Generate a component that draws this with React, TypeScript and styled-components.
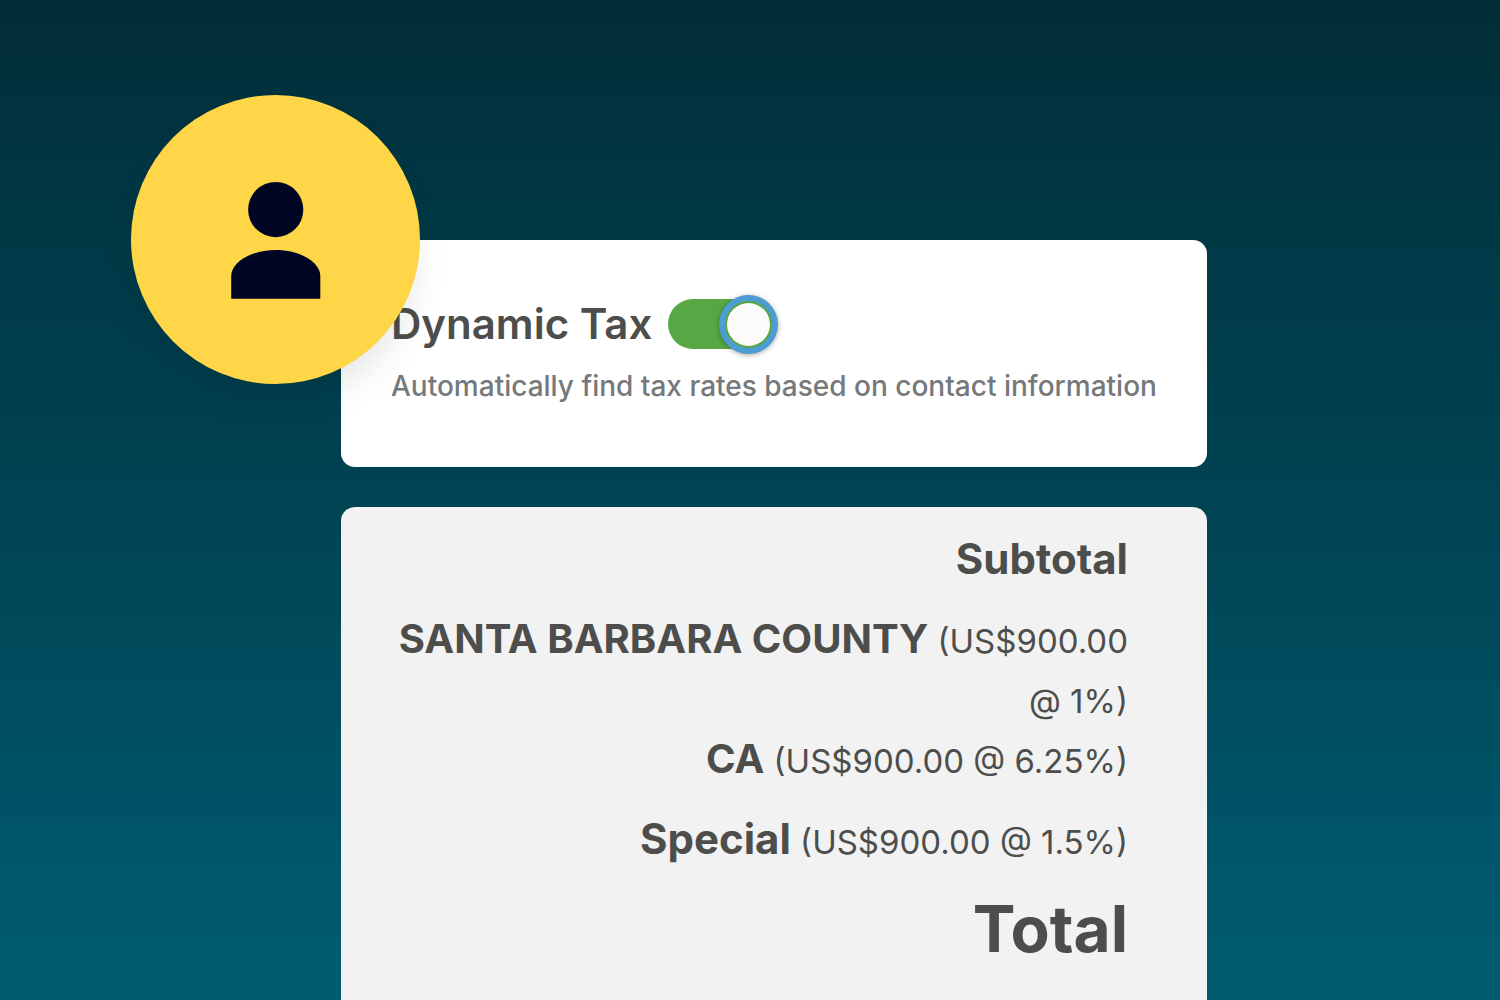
import React from "react";
import styled, { createGlobalStyle } from "styled-components";

const GlobalStyle = createGlobalStyle`
  *, *::before, *::after { box-sizing: border-box; }
  body {
    margin: 0;
    background: #00596f;
    color: #4d4e4c;
    font-family: Inter, "Liberation Sans", sans-serif;
  }
`;

const Page = styled.main`
  display: grid;
  grid-template-columns: 341fr 866fr 293fr;
  min-height: 100vh;
  padding-top: 240px;
  overflow: hidden;
  background: linear-gradient(180deg, #032d37 0%, #003744 20%, #004251 47%, #005a70 95%);
`;

const Column = styled.div`
  grid-column: 2;
  display: flex;
  flex-direction: column;
  gap: 40px;
`;

const SettingCard = styled.section`
  position: relative;
  display: flex;
  flex-direction: column;
  gap: 12px;
  padding: 54px 40px 61px 50px;
  border-radius: 14px;
  background: #fff;
`;

const Avatar = styled.div`
  position: absolute;
  top: -145px;
  left: -210px;
  width: 289px;
  height: 289px;
  border-radius: 50%;
  background: #ffd647;
  box-shadow: 0 22px 36px -6px rgba(0, 0, 0, 0.1);

  svg { display: block; width: 100%; height: 100%; }
`;

const SettingRow = styled.div`
  display: flex;
  align-items: center;
  gap: 16px;
  height: 60px;
`;

const SettingLabel = styled.label`
  font-size: 42px;
  font-weight: 600;
  line-height: 60px;
  white-space: nowrap;
`;

const Switch = styled.input`
  appearance: none;
  flex: none;
  display: flex;
  align-items: center;
  width: 105px;
  height: 50px;
  margin: 0;
  padding: 3px;
  border-radius: 25px;
  background: #57a845;
  cursor: pointer;

  &::before {
    content: "";
    width: 43px;
    height: 43px;
    border-radius: 50%;
    background: #fbfbfb;
    box-shadow: 0 0 0 2px #57a845, 0 0 0 8px #4d9dd2, 0 1px 5px 8px rgba(0, 0, 0, 0.35);
  }

  &:checked { justify-content: flex-end; }
  &:not(:checked) { background: #b5b5b5; }
`;

const Hint = styled.p`
  margin: 0;
  color: #75797b;
  font-size: 28px;
  font-weight: 500;
  line-height: 40px;
  white-space: nowrap;
`;

const TotalsCard = styled.section`
  flex: 1;
  padding: 22px 79px 20px 50px;
  border-radius: 14px 14px 0 0;
  background: #f2f2f2;
`;

const Totals = styled.ul`
  margin: 0;
  padding: 0;
  list-style: none;
  text-align: right;
`;

const nameSizes = { compact: "40px", regular: "42px", large: "64px" };

const TotalsRow = styled.li<{ $size: keyof typeof nameSizes; $spaced?: boolean }>`
  margin-bottom: ${(p) => (p.$spaced ? "20px" : "0")};
  font-size: ${(p) => nameSizes[p.$size]};
  line-height: ${(p) => (p.$size === "large" ? "80px" : "60px")};
`;

const RowName = styled.strong<{ $size: keyof typeof nameSizes }>`
  font-weight: ${(p) => (p.$size === "compact" ? 650 : 700)};
`;

const Rate = styled.span`
  font-size: 33px;
  line-height: 1;
`;

const rows: {
  name: string;
  size: keyof typeof nameSizes;
  rate?: string;
  spaced?: boolean;
}[] = [
  { name: "Subtotal", size: "regular", spaced: true },
  { name: "SANTA BARBARA COUNTY", size: "compact", rate: "(US$900.00 @ 1%)" },
  { name: "CA", size: "compact", rate: "(US$900.00 @ 6.25%)", spaced: true },
  { name: "Special", size: "regular", rate: "(US$900.00 @ 1.5%)", spaced: true },
  { name: "Total", size: "large" },
];

export default function App() {
  return (
    <>
      <GlobalStyle />
      <Page>
        <Column>
          <SettingCard>
            <SettingRow>
              <SettingLabel htmlFor="dynamic-tax">Dynamic Tax</SettingLabel>
              <Switch id="dynamic-tax" type="checkbox" role="switch" defaultChecked />
            </SettingRow>
            <Hint>Automatically find tax rates based on contact information</Hint>
            <Avatar>
              <svg viewBox="0 0 289 289" aria-hidden="true" fill="#000523">
                <circle cx="144.7" cy="114.6" r="27.6" />
                <path d="M100.200 203.700V181C100.200 168 119 155 144.700 155S189.300 168 189.300 181V203.700Z" />
              </svg>
            </Avatar>
          </SettingCard>
          <TotalsCard>
            <Totals>
              {rows.map((row) => (
                <TotalsRow key={row.name} $size={row.size} $spaced={row.spaced}>
                  <RowName $size={row.size}>{row.name}</RowName>
                  {row.rate && <Rate> {row.rate}</Rate>}
                </TotalsRow>
              ))}
            </Totals>
          </TotalsCard>
        </Column>
      </Page>
    </>
  );
}
